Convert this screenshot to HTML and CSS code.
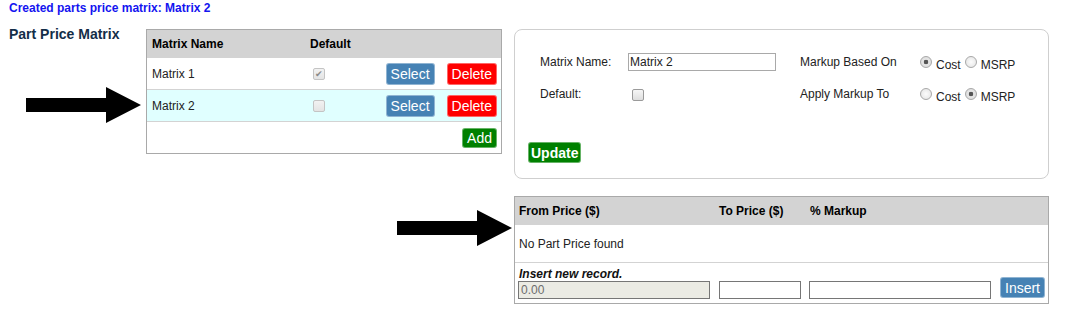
FILE: index.html
```html
<!DOCTYPE html>
<html lang="en">

<head>
    <meta charset="UTF-8">
    <meta name="viewport" content="width=device-width, initial-scale=1.0">
    <title>Part Price Matrix</title>
    <link rel="stylesheet" href="styles.css">
</head>

<body>
    <p class="notice">Created parts price matrix: Matrix 2</p>

    <div class="top">
        <div class="side">
            <h2>Part Price Matrix</h2>
            <svg class="arrow" width="115" height="36" viewBox="0 0 115 36">
                <polygon points="0,11 80,11 80,0 115,18 80,36 80,25 0,25" />
            </svg>
        </div>

        <table class="grid matrix-list">
            <colgroup>
                <col class="c-name">
                <col class="c-default">
                <col>
            </colgroup>
            <thead>
                <tr>
                    <th>Matrix Name</th>
                    <th>Default</th>
                    <th></th>
                </tr>
            </thead>
            <tbody>
                <tr>
                    <td>Matrix 1</td>
                    <td><input type="checkbox" checked disabled></td>
                    <td class="actions">
                        <button class="btn btn-blue">Select</button><button class="btn btn-red">Delete</button>
                    </td>
                </tr>
                <tr class="selected">
                    <td>Matrix 2</td>
                    <td><input type="checkbox" disabled></td>
                    <td class="actions">
                        <button class="btn btn-blue">Select</button><button class="btn btn-red">Delete</button>
                    </td>
                </tr>
                <tr>
                    <td colspan="3" class="actions"><button class="btn btn-green btn-add">Add</button></td>
                </tr>
            </tbody>
        </table>

        <form class="panel">
            <div class="fields">
                <label>Matrix Name:</label>
                <input type="text" class="name-input" value="Matrix 2">
                <span>Markup Based On</span>
                <span class="radios">
                    <input type="radio" name="based" checked><span>Cost</span>
                    <input type="radio" name="based"><span>MSRP</span>
                </span>

                <label>Default:</label>
                <span class="check"><input type="checkbox"></span>
                <span>Apply Markup To</span>
                <span class="radios">
                    <input type="radio" name="apply"><span>Cost</span>
                    <input type="radio" name="apply" checked><span>MSRP</span>
                </span>
            </div>
            <button type="button" class="btn btn-green btn-update">Update</button>
        </form>
    </div>

    <div class="bottom">
        <svg class="arrow" width="115" height="36" viewBox="0 0 115 36">
            <polygon points="0,11 80,11 80,0 115,18 80,36 80,25 0,25" />
        </svg>

        <table class="grid price-list">
            <colgroup>
                <col class="c-from">
                <col class="c-to">
                <col class="c-markup">
                <col>
            </colgroup>
            <thead>
                <tr>
                    <th>From Price ($)</th>
                    <th>To Price ($)</th>
                    <th>% Markup</th>
                    <th></th>
                </tr>
            </thead>
            <tbody>
                <tr class="empty">
                    <td colspan="4">No Part Price found</td>
                </tr>
                <tr class="insert">
                    <td colspan="4">
                        <em class="insert-title">Insert new record.</em>
                        <div class="insert-fields">
                            <input type="text" class="price-input from" value="0.00" readonly>
                            <input type="text" class="price-input to">
                            <input type="text" class="price-input markup">
                            <button class="btn btn-blue btn-insert">Insert</button>
                        </div>
                    </td>
                </tr>
            </tbody>
        </table>
    </div>
</body>

</html>
```

FILE: styles.css
```css
* {
    box-sizing: border-box;
}

body {
    margin: 0;
    font-family: "Liberation Sans", Arial, sans-serif;
    font-size: 12px;
    color: #222;
    background: #fff;
}

.notice {
    margin: 0;
    padding: 1px 0 0 9px;
    line-height: 14px;
    font-weight: bold;
    color: #1414f0;
}

.top {
    display: flex;
    align-items: flex-start;
    margin-top: 14px;
}

.side {
    width: 146px;
    padding-left: 9px;
}

.side h2 {
    margin: -3px 0 0;
    font-size: 14px;
    line-height: 16px;
    color: #132d48;
}

.arrow {
    display: block;
    fill: #000;
    flex-shrink: 0;
}

.side .arrow {
    margin: 45px 0 0 17px;
}

/* tables */
.grid {
    border-collapse: separate;
    border-spacing: 0;
    border: 1px solid #a9a9a9;
}

.grid th {
    background: #d3d3d3;
    color: #000;
    font-weight: bold;
    text-align: left;
    padding: 0 5px;
}

.grid td {
    padding: 0 5px;
    vertical-align: middle;
}

.grid thead tr {
    height: 28px;
}

.matrix-list {
    width: 356px;
}

.matrix-list col.c-name {
    width: 158px;
}

.matrix-list col.c-default {
    width: 75px;
}

.matrix-list tbody tr {
    height: 32px;
}

.matrix-list tbody tr td {
    border-bottom: 1px solid #d3d3d3;
}

.matrix-list tbody tr:last-child {
    height: 31px;
}

.matrix-list tbody tr:last-child td {
    border-bottom: none;
}

.matrix-list tr.selected td {
    background: #e0ffff;
}

.actions {
    text-align: right;
    padding-right: 4px !important;
}

/* buttons */
.btn {
    font-family: inherit;
    font-size: 14px;
    line-height: 18px;
    height: 22px;
    padding: 0 4px;
    border: 1px solid rgba(255, 255, 255, 0.4);
    border-radius: 3px;
    color: #fff;
    cursor: pointer;
    vertical-align: middle;
}

.btn + .btn {
    margin-left: 12px;
}

.btn-blue {
    background: #4682b4;
}

.btn-red {
    background: #ff0000;
}

.btn-green {
    background: #008000;
}

.btn-add {
    height: 20px;
}

.btn-update {
    display: block;
    height: 21px;
    padding: 0 2px;
    font-weight: bold;
    margin-top: 38px;
}

.btn-insert {
    height: 21px;
    margin-left: 9px;
    margin-bottom: 1px;
}

/* checkboxes and radios */
input[type="checkbox"],
input[type="radio"] {
    appearance: none;
    -webkit-appearance: none;
    width: 12px;
    height: 12px;
    margin: 0;
    border: 1px solid #9a9a9a;
    background: linear-gradient(#f6f6f6, #dedede);
    vertical-align: middle;
    position: relative;
}

input[type="checkbox"] {
    border-radius: 2px;
    margin-left: 3px;
}

input[type="checkbox"]:disabled {
    border-color: #c4c4c4;
    background: linear-gradient(#f2f2f2, #e4e4e4);
}

input[type="checkbox"]:checked::after {
    content: "\2714";
    position: absolute;
    left: 1px;
    top: -1px;
    font-size: 9px;
    line-height: 12px;
    color: #8a8a8a;
}

input[type="radio"] {
    border-radius: 50%;
    border-color: #a8a8a8;
    background: radial-gradient(circle, #fcfcfc 0, #e2e2e2 100%);
}

input[type="radio"]:checked {
    background: radial-gradient(circle, #555 0, #555 2px, #e6e6e6 2.6px, #d8d8d8 100%);
}

/* edit panel */
.panel {
    width: 535px;
    margin-left: 12px;
    border: 1px solid #cfcfcf;
    border-radius: 8px;
    padding: 22px 0 15px 13px;
}

.fields {
    display: grid;
    grid-template-columns: 88px 172px 120px auto;
    grid-auto-rows: 20px;
    row-gap: 12px;
    align-items: center;
    margin-left: 12px;
    line-height: 20px;
}

.name-input {
    width: 148px;
    height: 18px;
    padding: 0 1px;
    border: 1px solid #a9a9a9;
    font-family: inherit;
    font-size: 12px;
    color: #222;
}

.check input[type="checkbox"] {
    margin-left: 4px;
}

.radios {
    display: flex;
    align-items: center;
    line-height: 14px;
}

.radios span {
    margin: 6px 4px 0 4px;
}

/* price list */
.bottom {
    display: flex;
    align-items: flex-start;
    margin-top: 17px;
}

.bottom .arrow {
    margin: 14px 2px 0 397px;
}

.price-list {
    width: 535px;
}

.price-list th {
    padding: 0 4px;
}

.price-list col.c-from {
    width: 200px;
}

.price-list col.c-to {
    width: 91px;
}

.price-list col.c-markup {
    width: 190px;
}

.price-list tr.empty {
    height: 38px;
}

.price-list tr.empty td {
    padding: 0 4px;
    border-bottom: 1px solid #d3d3d3;
}

.price-list tr.insert td {
    padding: 4px 0 4px 3px;
}

.insert-title {
    display: block;
    line-height: 14px;
    font-weight: bold;
    color: #111;
    padding-left: 1px;
}

.insert-fields {
    display: flex;
    align-items: flex-end;
    margin-top: -4px;
}

.price-input {
    height: 18px;
    padding: 0 2px;
    border: 1px solid #767676;
    font-family: inherit;
    font-size: 12px;
    color: #222;
}

.price-input.from {
    width: 192px;
    background: #ebebe4;
    color: #6d6d6d;
}

.price-input.to {
    width: 82px;
    margin-left: 9px;
}

.price-input.markup {
    width: 182px;
    margin-left: 8px;
}
```
